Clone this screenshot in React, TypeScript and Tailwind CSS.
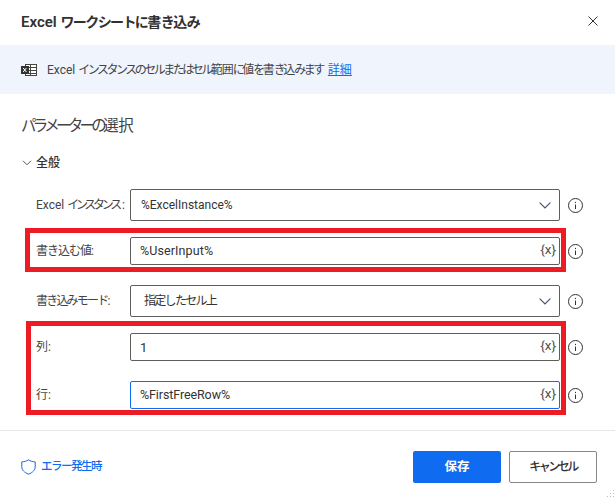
import React from "react";

const F = { fontFamily: 'Roboto, "Noto Sans CJK JP", sans-serif' };

function Info() {
  return (
    <svg width="15" height="15" viewBox="0 0 15 15" fill="none" className="shrink-0 text-[#333]">
      <circle cx="7.500" cy="7.500" r="7" stroke="currentColor" strokeWidth="1" />
      <path d="M7.500 6.500v4.500" stroke="currentColor" strokeWidth="1" />
      <rect x="7" y="3.900" width="1" height="1.200" fill="currentColor" />
    </svg>
  );
}

function Chevron() {
  return (
    <svg width="12" height="7" viewBox="0 0 12 7" fill="none" className="shrink-0">
      <path d="M.7.7L6 6l5.300-5.300" stroke="#44546a" strokeWidth="1.200" />
    </svg>
  );
}

function Row({
  label,
  value,
  kind,
  h,
  focus,
  mt,
  labelClass,
  textClass,
}: {
  label: React.ReactNode;
  value: string;
  kind: "select" | "text";
  h: string;
  focus?: boolean;
  mt: string;
  labelClass?: string;
  textClass?: string;
}) {
  return (
    <div className={`flex items-center ${mt}`}>
      <div className={`w-[94px] shrink-0 text-[12px] text-[#444] leading-none whitespace-nowrap ${labelClass ?? ""}`}>{label}</div>
      <div
        className={`w-[430px] ${h} shrink-0 flex items-center justify-between rounded-[2px] border bg-white ${
          focus ? "border-[#0f6cf0]" : "border-[#605e5c]"
        } ${kind === "select" ? "pl-[10px] pr-[8px]" : "pl-[9px] pr-[3px]"}`}
      >
        <span className={`leading-none text-[#333] ${textClass ?? "text-[12.500px]"}`}>{value}</span>
        {kind === "select" ? (
          <Chevron />
        ) : (
          <span className="text-[13.500px] text-[#555] leading-none -mt-[3px]">{"{x}"}</span>
        )}
      </div>
      <div className="ml-[8px]">
        <Info />
      </div>
    </div>
  );
}

export default function App() {
  return (
    <div style={F} className="w-[615px] h-[499px] bg-white flex flex-col overflow-hidden relative">
      <header className="h-[45px] shrink-0 flex items-center justify-between pl-[21px] pr-[17px]">
        <h1 className="text-[15px] font-semibold text-[#323130] leading-none -mt-[1px] whitespace-nowrap">
          Excel{" "}
          <span className="text-[14px] tracking-[-1.600px]">ワークシートに</span>
          <span className="text-[14px] tracking-[-0.500px]">書</span>
          <span className="text-[14px] tracking-[-1.600px]">き</span>
          <span className="text-[14px] tracking-[-0.500px]">込</span>
          <span className="text-[14px] tracking-[-1.600px]">み</span>
        </h1>
        <svg width="10" height="10" viewBox="0 0 10 10" fill="none" className="-mt-[3px]">
          <path d="M.5.5l9 9M9.500.5l-9 9" stroke="#333" strokeWidth="1" />
        </svg>
      </header>

      <div className="h-[49px] shrink-0 bg-[#f0f5fd] flex items-center pl-[21px]">
        <svg width="16" height="14" viewBox="0 0 16 14" fill="none" className="shrink-0">
          <rect x="4.500" y="1.500" width="11" height="11" fill="#fff" stroke="#444" />
          <path d="M4.500 4.500h11M4.500 7.500h11M4.500 10.500h11M9.500 1.500v11" stroke="#444" />
          <rect x="0" y="3" width="8" height="8" fill="#333" />
          <path d="M2.200 5l3.200 4M5.400 5L2.200 9" stroke="#fff" strokeWidth="1" />
        </svg>
        <p className="ml-[10px] mt-[1px] text-[12px] text-[#444] leading-none whitespace-nowrap">
          Excel{" "}
          <span className="tracking-[-2.500px]">インスタンスのセルまたはセル</span>
          <span className="tracking-[-1px]">範囲</span>
          <span className="tracking-[-2.500px]">に</span>
          <span className="tracking-[-1px]">値</span>
          <span className="tracking-[-2.500px]">を</span>
          <span className="tracking-[-1px]">書</span>
          <span className="tracking-[-2.500px]">き</span>
          <span className="tracking-[-1px]">込</span>
          <span className="tracking-[-2.500px]">みます</span>
          <a className="ml-[5px] text-[#0f6cf0] underline">詳細</a>
        </p>
      </div>

      <h2 className="mt-[21px] ml-[21px] text-[15.500px] text-[#444] leading-[22px] whitespace-nowrap">
        <span className="tracking-[-3.700px]">パラメーターの</span>
        <span className="tracking-[-0.500px]">選択</span>
      </h2>

      <div className="mt-[19px] ml-[22px] flex items-center gap-[4px] h-[14px]">
        <svg width="10" height="6" viewBox="0 0 10 6" fill="none">
          <path d="M1 .8l4 4 4-4" stroke="#555" strokeWidth="1" />
        </svg>
        <span className="text-[12px] font-medium text-[#333] leading-none">全般</span>
      </div>

      <div className="ml-[36px] mt-[19px] flex flex-col">
        <Row label={<>Excel <span className="tracking-[-3.300px]">インスタンス</span><span className="ml-[3px]">:</span></>} value="%ExcelInstance%" textClass="text-[12px]" kind="select" h="h-[32px]" mt="mt-0" />
        <div className="relative">
          <Row label="書き込む値:" labelClass="tracking-[-1px]" value="%UserInput%" textClass="text-[12.500px] mt-[1px] tracking-[0.1px]" kind="text" h="h-[28px]" mt="mt-[16px]" />
          <div className="absolute left-[-11px] top-[7px] w-[541px] h-[44px] border-[5px] border-[#ed1c24]" />
        </div>
        <Row label="書き込みモード:" labelClass="tracking-[-1.800px]" value="指定したセル上" textClass="text-[12px] ml-[3px] tracking-[-1.700px]" kind="select" h="h-[32px]" mt="mt-[20px]" />
        <div className="relative">
          <Row label="列:" value="1" textClass="text-[13px] mt-[1px]" kind="text" h="h-[28px]" mt="mt-[16px]" />
          <Row label="行:" value="%FirstFreeRow%" textClass="text-[12.500px] mt-[1px] tracking-[-0.1px]" kind="text" h="h-[28px]" focus mt="mt-[20px]" />
          <div className="absolute left-[-10px] top-[4px] w-[540px] h-[94px] border-[5px] border-[#ed1c24]" />
        </div>
      </div>

      <div className="mt-[21px] h-px bg-[#e6e6e6] shrink-0" />

      <footer className="flex items-center justify-between mt-[20px] pl-[21px] pr-[18px]">
        <div className="flex items-center gap-[5px] text-[#0f6cf0]">
          <svg width="15" height="16" viewBox="0 0 15 16" fill="none">
            <path d="M7.500 .8C5.500 2.200 3.300 2.800 .8 2.900V8c0 3 2.500 5.500 6.700 7.200C11.700 13.500 14.200 11 14.200 8V2.900C11.700 2.800 9.500 2.200 7.500 .8z" stroke="currentColor" strokeWidth="1" />
          </svg>
          <span className="text-[11.500px] font-medium leading-none tracking-[-1.500px]">エラー発生時</span>
        </div>
        <div className="flex gap-[8px]">
          <button className="w-[88px] h-[32px] rounded-[2px] bg-[#0f6cf0] text-white text-[12.500px] font-semibold leading-none">保存</button>
          <button className="w-[88px] h-[32px] rounded-[2px] border border-[#8a8886] bg-white text-[#323130] text-[12px] font-medium leading-none tracking-[-2.500px]">キャンセル</button>
        </div>
      </footer>

      <svg width="8" height="8" viewBox="0 0 8 8" className="absolute right-0 bottom-[1px]" fill="#b8bcc4">
        <rect x="6" y="0" width="1" height="1" />
        <rect x="3" y="3" width="1" height="1" />
        <rect x="6" y="3" width="1" height="1" />
        <rect x="0" y="6" width="1" height="1" />
        <rect x="3" y="6" width="1" height="1" />
        <rect x="6" y="6" width="1" height="1" />
      </svg>
    </div>
  );
}
